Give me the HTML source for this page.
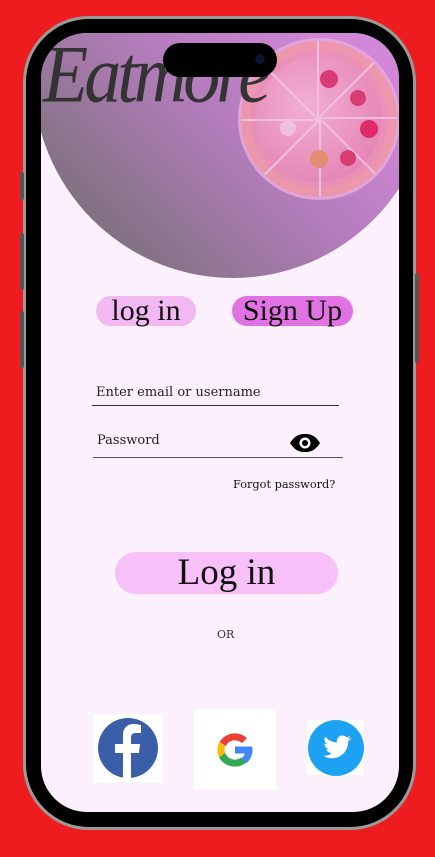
<!DOCTYPE html>
<html><head><meta charset="utf-8"><style>
*{margin:0;padding:0;box-sizing:border-box}
body{width:435px;height:857px;background:#ef1c1f;position:relative;overflow:hidden;font-family:"Liberation Serif",serif}
.rim{position:absolute;left:23px;top:16px;width:393px;height:814px;border-radius:66px;background:#9a9a9a}
.frame{position:absolute;left:26px;top:19px;width:387px;height:808px;border-radius:63px;background:#000}
.btn{position:absolute;background:#555;width:4px;border-radius:2px}
.screen{position:absolute;left:41px;top:33px;width:358px;height:779px;border-radius:46px;background:#fcf0fc;overflow:hidden}
.blob{position:absolute;left:-8px;top:-160px;width:400px;height:405px;border-radius:50%;background:linear-gradient(225deg,#e190e6 0%,#cf86d6 35%,#b27cba 58%,#8e7590 78%,#686868 100%)}
.island{position:absolute;left:122px;top:10px;width:114px;height:34px;border-radius:17px;background:#000}
.cam{position:absolute;left:214px;top:21px;width:10px;height:10px;border-radius:50%;background:#0d1130}
.logo{position:absolute;left:2px;top:0px;font-family:"Liberation Serif",serif;font-style:italic;font-size:74px;color:#333;letter-spacing:-4px;transform:scaleY(1.1)}
.pizza{position:absolute;left:200px;top:8px;width:156px;height:156px;border-radius:50%;background:#ee92b6;border:9px solid #f09aaa;box-shadow:0 0 0 3px #e6a8dc;opacity:.9}
.pizza .in{position:absolute;inset:6px;border-radius:50%;background:radial-gradient(circle at 40% 40%,#f6b4d4,#e678a8)}
.sl{position:absolute;left:50%;top:50%;width:2px;height:78px;background:#f7c6e6;transform-origin:0 0}
.dot{position:absolute;border-radius:50%;background:#d9366a}
.pill{position:absolute;height:30px;border-radius:15px;font-size:30px;line-height:30px;text-align:center;color:#111}
.lbl{position:absolute;font-family:"DejaVu Serif",serif;font-size:13px;color:#222}
.line{position:absolute;height:1px;background:#333}
</style></head><body>
<div class="rim"></div>
<div class="frame"></div>
<div class="btn" style="left:20px;top:172px;height:28px"></div>
<div class="btn" style="left:20px;top:233px;height:57px"></div>
<div class="btn" style="left:20px;top:311px;height:57px"></div>
<div class="btn" style="left:415px;top:273px;height:90px"></div>
<div class="screen">
  <div class="blob"></div>
  <div class="pizza"><div class="in"></div>
    <div class="sl" style="transform:rotate(0deg)"></div><div class="sl" style="transform:rotate(45deg)"></div><div class="sl" style="transform:rotate(90deg)"></div><div class="sl" style="transform:rotate(135deg)"></div><div class="sl" style="transform:rotate(180deg)"></div><div class="sl" style="transform:rotate(225deg)"></div><div class="sl" style="transform:rotate(270deg)"></div><div class="sl" style="transform:rotate(315deg)"></div>
    <div class="dot" style="left:70px;top:20px;width:18px;height:18px"></div>
    <div class="dot" style="left:100px;top:40px;width:16px;height:16px"></div>
    <div class="dot" style="left:110px;top:70px;width:18px;height:18px;background:#e02060"></div>
    <div class="dot" style="left:30px;top:70px;width:16px;height:16px;background:#f4c8e0"></div>
    <div class="dot" style="left:60px;top:100px;width:18px;height:18px;background:#e6906a"></div>
    <div class="dot" style="left:90px;top:100px;width:16px;height:16px"></div>
  </div>
  <div class="logo">Eatmore</div>
  <div class="island"></div><div class="cam"></div>
  <div class="pill" style="left:55px;top:263px;width:100px;background:#f2b8f2">log in</div>
  <div class="pill" style="left:191px;top:263px;width:121px;background:#e172e4">Sign Up</div>
  <div class="lbl" style="left:55px;top:352px">Enter email or username</div>
  <div class="line" style="left:51px;top:372px;width:247px"></div>
  <div class="lbl" style="left:56px;top:400px">Password</div>
  <svg style="position:absolute;left:248px;top:400px" width="32" height="20" viewBox="0 0 32 20"><path d="M1 10C6 2 11 1 16 1s10 1 15 9c-5 8-10 9-15 9S6 18 1 10z" fill="#000"/><circle cx="16" cy="10" r="5.5" fill="#fff"/><circle cx="16" cy="10" r="3" fill="#000"/></svg>
  <div class="line" style="left:52px;top:424px;width:250px;background:#555"></div>
  <div class="lbl" style="left:192px;top:445px;font-size:11.3px;color:#111">Forgot password?</div>
  <div class="pill" style="left:74px;top:519px;width:223px;height:42px;border-radius:21px;background:#f8c0f8;font-size:37px;line-height:42px">Log in</div>
  <div class="lbl" style="left:176px;top:595px;font-size:11px;color:#333">OR</div>
  <div style="position:absolute;left:52px;top:681px;width:70px;height:69px;background:#fff"></div>
  <svg style="position:absolute;left:56px;top:684px" width="62" height="62" viewBox="0 0 62 62"><circle cx="31" cy="31" r="30" fill="#3b5ea8"/><path d="M34 61V36h8l1-9h-9v-6c0-3 1-5 5-5h5V8c-1 0-4-1-7-1-7 0-11 4-11 11v9h-8v9h8v25z" fill="#fff"/></svg>
  <div style="position:absolute;left:153px;top:676px;width:82px;height:81px;background:#fff"></div>
  <svg style="position:absolute;left:173px;top:696px" width="42" height="42" viewBox="0 0 48 48"><path d="M6.3 14.7l7 5.1C15 15.7 19.1 13 24 13c3.1 0 5.9 1.2 8 3.1l5.7-5.7C34.1 7.1 29.3 5 24 5 16.3 5 9.7 9.3 6.3 14.7z" fill="#ea4335"/><path d="M24 43c5.2 0 9.9-2 13.4-5.2l-6.2-5.2C29.2 34.1 26.7 35 24 35c-5.2 0-9.6-3.3-11.3-7.9l-6.9 5.3C9.1 38.6 16 43 24 43z" fill="#34a853"/><path d="M5.8 32.4l6.9-5.3C12.3 26.1 12 25 12 24s.2-2.8.6-3.8l-6.9-5.3C4.6 17.7 4 20.8 4 24s.7 6 1.8 8.4z" fill="#fbbc05"/><path d="M43.6 20H24v8h11.3c-.8 2.3-2.2 4.2-4.1 5.6l6.2 5.2C41 35.5 44 30.3 44 24c0-1.4-.1-2.7-.4-4z" fill="#4285f4"/></svg>
  <div style="position:absolute;left:266px;top:687px;width:57px;height:55px;background:#fff"></div>
  <svg style="position:absolute;left:267px;top:687px" width="56" height="56" viewBox="0 0 56 56"><circle cx="28" cy="28" r="28" fill="#1da1f2"/><path d="M43 18c-1 .5-2.1.8-3.3 1 1.2-.7 2.1-1.8 2.5-3.1-1.1.7-2.3 1.1-3.6 1.4a5.7 5.7 0 0 0-9.7 5.2c-4.7-.2-8.9-2.5-11.7-5.9a5.7 5.7 0 0 0 1.8 7.6c-.9 0-1.8-.3-2.6-.7 0 2.8 2 5.1 4.6 5.6-.8.2-1.7.3-2.6.1.7 2.3 2.8 3.9 5.3 4-2.4 1.9-5.5 2.8-8.4 2.5 2.5 1.6 5.5 2.5 8.7 2.5 10.5 0 16.2-8.7 16.2-16.2v-.7c1.1-.8 2.1-1.8 2.8-2.9z" fill="#fff"/></svg>
</div>
</body></html>
